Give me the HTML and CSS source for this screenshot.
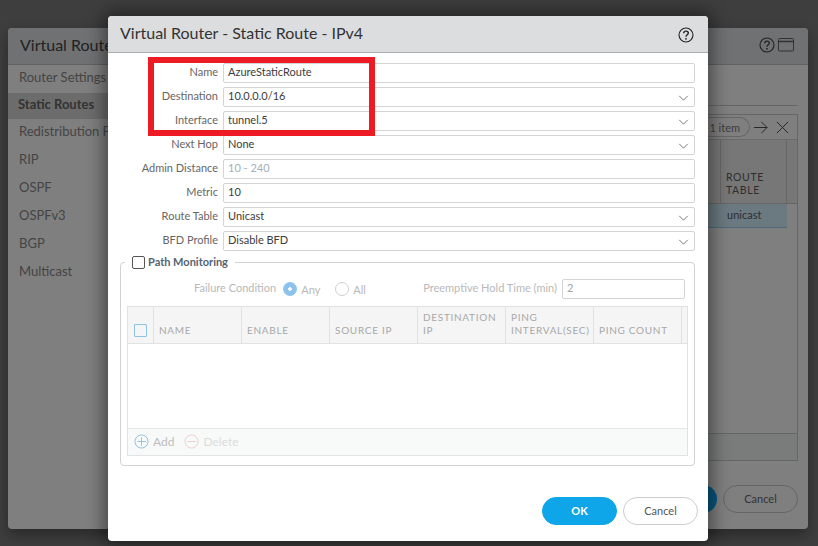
FILE: index.html
```html
<!DOCTYPE html>
<html lang="en">
<head>
<meta charset="utf-8">
<title>Virtual Router - Static Route - IPv4</title>
<link rel="stylesheet" href="styles.css">
</head>
<body>
<div class="desktop">
  <section class="window">
    <header class="win-head">
      <span class="win-title">Virtual Router</span>
      <span class="win-icons">
        <svg class="ico-help" viewBox="0 0 16 16"><circle cx="8" cy="8" r="7" fill="none" stroke="#222" stroke-width="1.1"/><path d="M5.700 6.200C5.800 4.800 6.800 4.100 8 4.100c1.300 0 2.300.8 2.300 2 0 1.700-2.300 1.700-2.300 3.600" fill="none" stroke="#222" stroke-width="1.300"/><circle cx="8" cy="11.800" r=".9" fill="#222"/></svg>
        <svg class="ico-max" viewBox="0 0 16 14"><rect x=".5" y=".5" width="15" height="12.500" rx="1" fill="none" stroke="#333"/><path d="M.5 3.500h15" stroke="#333" stroke-width="1.500"/></svg>
      </span>
    </header>
    <div class="win-body">
      <nav class="side">
        <div class="side-item">Router Settings</div>
        <div class="side-item active">Static Routes</div>
        <div class="side-item">Redistribution Profile</div>
        <div class="side-item">RIP</div>
        <div class="side-item">OSPF</div>
        <div class="side-item">OSPFv3</div>
        <div class="side-item">BGP</div>
        <div class="side-item">Multicast</div>
      </nav>
      <div class="win-main">
        <div class="tabs-line"></div>
        <div class="grid-box">
          <div class="grid-tools">
            <span class="pill">1 item</span>
            <svg class="tool" viewBox="0 0 16 16"><path d="M1 8h14M9 2l6 6-6 6" fill="none" stroke="#222" stroke-width="1"/></svg>
            <svg class="tool close" viewBox="0 0 16 16"><path d="M2 2l12 12M14 2L2 14" fill="none" stroke="#222" stroke-width="1"/></svg>
          </div>
          <div class="grid-head"><div class="col-rt">ROUTE<br>TABLE</div></div>
          <div class="grid-row"><div class="col-val">unicast</div></div>
          <div class="grid-spacer"></div>
          <div class="grid-foot"></div>
        </div>
      </div>
    </div>
    <footer class="win-foot">
      <span class="back-ok"></span>
      <span class="back-cancel">Cancel</span>
    </footer>
  </section>

  <section class="dialog">
    <header class="dlg-head">
      <h1 class="dlg-title">Virtual Router - Static Route - IPv4</h1>
      <svg class="dlg-help" viewBox="0 0 16 16"><circle cx="8" cy="8" r="7" fill="none" stroke="#222" stroke-width="1.100"/><path d="M5.700 6.200C5.800 4.800 6.800 4.100 8 4.100c1.300 0 2.300.8 2.300 2 0 1.700-2.300 1.700-2.300 3.600" fill="none" stroke="#222" stroke-width="1.400"/><circle cx="8" cy="11.800" r=".9" fill="#222"/></svg>
    </header>
    <div class="dlg-body">
      <div class="form">
        <label class="lbl">Name</label><div class="field">AzureStaticRoute</div>
        <label class="lbl">Destination</label><div class="field select">10.0.0.0/16<svg class="chev" viewBox="0 0 12 7"><path d="M1 1l5 5 5-5" fill="none" stroke="#666"/></svg></div>
        <label class="lbl">Interface</label><div class="field select">tunnel.5<svg class="chev" viewBox="0 0 12 7"><path d="M1 1l5 5 5-5" fill="none" stroke="#666"/></svg></div>
        <label class="lbl">Next Hop</label><div class="field select">None<svg class="chev" viewBox="0 0 12 7"><path d="M1 1l5 5 5-5" fill="none" stroke="#666"/></svg></div>
        <label class="lbl">Admin Distance</label><div class="field placeholder">10 - 240</div>
        <label class="lbl">Metric</label><div class="field">10</div>
        <label class="lbl">Route Table</label><div class="field select">Unicast<svg class="chev" viewBox="0 0 12 7"><path d="M1 1l5 5 5-5" fill="none" stroke="#666"/></svg></div>
        <label class="lbl">BFD Profile</label><div class="field select">Disable BFD<svg class="chev" viewBox="0 0 12 7"><path d="M1 1l5 5 5-5" fill="none" stroke="#666"/></svg></div>
      </div>
      <div class="group">
        <div class="legend"><span class="check"></span><span class="legend-text">Path Monitoring</span></div>
        <div class="opts">
          <span class="opt-label">Failure Condition</span>
          <span class="radio on"></span><span class="radio-text">Any</span>
          <span class="radio"></span><span class="radio-text">All</span>
          <span class="opt-label hold">Preemptive Hold Time (min)</span>
          <div class="field hold-input">2</div>
        </div>
        <div class="pm-table">
          <div class="pm-head">
            <div class="pm-c pm-check"><span class="blue-box"></span></div>
            <div class="pm-c">NAME</div>
            <div class="pm-c">ENABLE</div>
            <div class="pm-c">SOURCE IP</div>
            <div class="pm-c">DESTINATION IP</div>
            <div class="pm-c">PING INTERVAL(SEC)</div>
            <div class="pm-c">PING COUNT</div>
            <div class="pm-c pm-end"></div>
          </div>
          <div class="pm-rows"></div>
          <div class="pm-foot">
            <svg class="act" viewBox="0 0 16 16"><circle cx="8" cy="8" r="7" fill="none" stroke="#8fbfdc"/><path d="M8 3.500v9M3.500 8h9" stroke="#8fbfdc"/></svg><span class="act-text">Add</span>
            <svg class="act del" viewBox="0 0 16 16"><circle cx="8" cy="8" r="7" fill="none" stroke="#f0cccc"/><path d="M3.500 8h9" stroke="#f0cccc"/></svg><span class="act-text del-text">Delete</span>
          </div>
        </div>
      </div>
      <div class="dlg-actions">
        <button class="btn primary">OK</button>
        <button class="btn">Cancel</button>
      </div>
    </div>
  </section>

  <div class="highlight"></div>
</div>
</body>
</html>
```
FILE: styles.css
```css
* { box-sizing: border-box; }
html, body { margin: 0; padding: 0; }
body { font-family: Lato, "Open Sans", sans-serif; font-size: 11px; color: #333; }
.desktop { position: relative; width: 818px; height: 546px; overflow: hidden; background: #3e3e3e; }

/* back window */
.window { position: absolute; left: 8px; top: 28px; width: 800px; height: 501px; display: flex; flex-direction: column; background: #7f7f7f; border-radius: 4px; box-shadow: 0 6px 14px rgba(0,0,0,.35); }
.win-head { height: 37px; flex: none; display: flex; align-items: center; justify-content: space-between; padding: 0 14px 3px 12px; background: #6f7172; border-bottom: 1px solid #5f6366; border-radius: 4px 4px 0 0; }
.win-title { font-size: 16px; color: #222; }
.win-icons { display: flex; align-items: center; gap: 3px; }
.ico-help { width: 16px; height: 16px; }
.ico-max { width: 16px; height: 14px; }
.win-body { flex: 1; display: flex; min-height: 0; }
.side { width: 105px; flex: none; }
.side-item { height: 28px; line-height: 23px; padding-left: 11px; font-size: 13px; color: #444; white-space: nowrap; }
.side-item:first-child { margin-top: -1px; height: 29px; line-height: 27px; }
.side-item.active { background: #6c6c6c; padding-left: 10px; font-weight: 700; color: #333; height: 26px; line-height: 22px; margin-bottom: 1px; }
.win-main { flex: 1; padding: 0 10px 0 0; display: flex; flex-direction: column; }
.tabs-line { height: 41px; flex: none; border-bottom: 1px solid #666; }
.grid-box { margin-top: 8px; height: 347px; border: 1px solid #666; display: flex; flex-direction: column; }
.grid-tools { height: 25px; flex: none; display: flex; align-items: center; justify-content: flex-end; padding-right: 7px; border-bottom: 1px solid #6a6a6a; background: #7f7f7f; }
.pill { border: 1px solid #666; border-left: 0; border-radius: 0 10px 10px 0; padding: 2px 9px 2px 8px; height: 20px; line-height: 15px; color: #3c3c3c; font-size: 11px; }
.tool { width: 15px; height: 15px; margin-left: 3px; }
.tool.close { margin-left: 7px; }
.grid-head { height: 64px; flex: none; display: flex; justify-content: flex-end; padding-right: 10px; border-bottom: 1px solid #666; background: #777; }
.col-rt { width: 67px; border: solid #666; border-width: 0 1px; padding: 31px 0 0 5px; font-size: 10.500px; line-height: 12.500px; letter-spacing: .6px; color: #2e2e2e; }
.grid-row { height: 24px; flex: none; display: flex; padding-right: 10px; }
.col-val { width: 100%; padding-left: 613px; line-height: 21px; background: #6a7a80; border-bottom: 1px solid #4c6a7a; color: #2e2e2e; }
.grid-spacer { flex: 1; }
.grid-foot { height: 27px; flex: none; border-top: 1px solid #666; background: #7a7c7c; }
.win-foot { height: 44px; flex: none; display: flex; justify-content: flex-end; gap: 6px; padding: 0 10px 16px 0; margin-top: 12px; }
.back-ok { width: 75px; height: 28px; border-radius: 14px; background: #08557c; }
.back-cancel { width: 75px; height: 28px; border-radius: 14px; border: 1px solid #666; text-align: center; line-height: 26px; color: #333; }

/* dialog */
.dialog { position: absolute; left: 108px; top: 16px; width: 600px; height: 525px; display: flex; flex-direction: column; background: #fff; border-radius: 4px; box-shadow: 0 0 18px 4px rgba(0,0,0,.45); }
.dlg-head { height: 37px; flex: none; display: flex; align-items: center; justify-content: space-between; padding: 0 14px 0 12px; background: #dcddde; border-bottom: 1px solid #a9adb0; border-radius: 4px 4px 0 0; }
.dlg-title { margin: 0 0 3px; font-size: 16px; font-weight: 400; color: #333; }
.dlg-help { width: 16px; height: 16px; margin-top: 1px; }
.dlg-body { flex: 1; padding: 10px 13px 0 12px; display: flex; flex-direction: column; }
.form { display: grid; grid-template-columns: 98px 1fr; column-gap: 5px; row-gap: 4px; grid-auto-rows: 20px; }
.lbl { text-align: right; line-height: 18px; font-size: 11px; color: #666; }
.field { position: relative; height: 20px; border: 1px solid #d2d4d5; border-bottom-width: 1.500px; border-radius: 2px; padding-left: 4px; line-height: 16px; font-size: 11px; color: #3c3c3c; background: #fff; }
.select { border-right-color: #d2d4d5; }
.chev { position: absolute; right: 5px; top: 7px; width: 11px; height: 6px; }
.placeholder { color: #9fb0bb; }

.group { position: relative; margin-top: 11px; height: 204px; border: 1px solid #cfd1d2; border-radius: 4px; padding: 16px 6px 0 6px; }
.legend { position: absolute; left: 4px; top: -7px; display: flex; align-items: center; gap: 3px; background: #fff; padding: 0 7px; height: 13px; }
.check { width: 13px; height: 13px; border: 1px solid #555; border-radius: 2px; background: #fff; }
.legend-text { font-size: 11px; font-weight: 700; color: #546472; margin-top: -2px; }
.opts { display: flex; align-items: center; height: 20px; padding-right: 3px; color: #b9b9b9; font-size: 11px; }
.opt-label { margin-left: 67px; margin-top: -3px; white-space: nowrap; }
.radio { width: 14px; height: 14px; margin-left: 7px; border-radius: 50%; border: 1px solid #cfcfcf; background: #fff; }
.radio.on { background: radial-gradient(circle, #fff 0 1.500px, #8cc2ee 2px); border-color: #8cc2ee; }
.radio-text { margin-left: 4px; width: 20px; }
.radio-text + .radio { margin-left: 14px; }
.opt-label.hold { margin-left: auto; margin-right: 5px; }
.hold-input { width: 123px; flex: none; color: #a4a4a4; border-bottom-width: 1px; height: 20px; }
.pm-table { margin-top: 7px; height: 150px; border: 1px solid #e1e2e3; display: flex; flex-direction: column; }
.pm-head { height: 37px; flex: none; display: grid; grid-template-columns: 26px repeat(5, 88px) 88px 1fr; background: #f5f5f5; border-bottom: 1px solid #e1e2e3; }
.pm-c { display: flex; align-items: flex-end; padding: 0 2px 6px 5px; border-right: 1px solid #e1e2e3; font-size: 10px; line-height: 13px; letter-spacing: .7px; color: #a8a8a8; }
.pm-end { border-right: 0; }
.pm-check { padding: 0 0 6px 6px; }
.blue-box { width: 13px; height: 13px; border: 1px solid #8cc2e6; border-bottom-width: 1.500px; border-radius: 1px; }
.pm-rows { flex: 1; }
.pm-foot { height: 27px; flex: none; display: flex; align-items: center; padding: 0 0 2px 6px; background: #f8f9f9; border-top: 1px solid #e6e7e7; }
.act { width: 15px; height: 15px; }
.act-text { margin-left: 4px; color: #bdbdbd; font-size: 12px; }
.del { margin-left: 10px; }
.del-text { color: #dcdcdc; }

.dlg-actions { display: flex; justify-content: flex-end; gap: 6px; margin-top: 31px; margin-right: -3px; }
.btn { width: 75px; height: 28px; border-radius: 14px; border: 1px solid #cbcdce; background: #fff; font: 11px Lato, sans-serif; color: #555; padding: 0 0 2px; }
.btn.primary { background: #0ea5e9; border-color: #0ea5e9; color: #fff; font-weight: 700; }

.highlight { position: absolute; left: 148px; top: 57px; width: 227px; height: 79px; border: 6px solid #ed1c24; }
```
